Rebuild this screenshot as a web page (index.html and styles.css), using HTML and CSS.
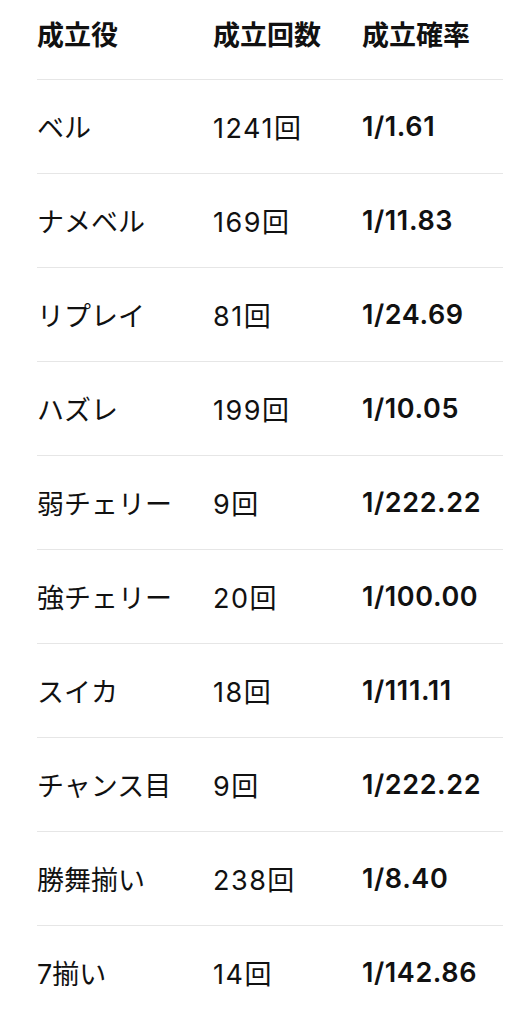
FILE: index.html
```html
<!DOCTYPE html>
<html lang="ja">
<head>
    <meta charset="UTF-8">
    <meta name="viewport" content="width=device-width, initial-scale=1.0">
    <title>成立役</title>
    <link rel="stylesheet" href="styles.css">
</head>
<body>
    <table class="stats">
        <thead>
            <tr>
                <th class="col-name">成立役</th>
                <th class="col-count">成立回数</th>
                <th class="col-rate">成立確率</th>
            </tr>
        </thead>
        <tbody>
            <tr><td>ベル</td><td class="count">1241回</td><td class="rate">1/1.61</td></tr>
            <tr><td>ナメベル</td><td class="count">169回</td><td class="rate">1/11.83</td></tr>
            <tr><td>リプレイ</td><td class="count">81回</td><td class="rate">1/24.69</td></tr>
            <tr><td>ハズレ</td><td class="count">199回</td><td class="rate">1/10.05</td></tr>
            <tr><td>弱チェリー</td><td class="count">9回</td><td class="rate">1/222.22</td></tr>
            <tr><td>強チェリー</td><td class="count">20回</td><td class="rate">1/100.00</td></tr>
            <tr><td>スイカ</td><td class="count">18回</td><td class="rate">1/111.11</td></tr>
            <tr><td>チャンス目</td><td class="count">9回</td><td class="rate">1/222.22</td></tr>
            <tr><td>勝舞揃い</td><td class="count">238回</td><td class="rate">1/8.40</td></tr>
            <tr><td>7揃い</td><td class="count">14回</td><td class="rate">1/142.86</td></tr>
        </tbody>
    </table>
</body>
</html>
```

FILE: styles.css
```css
body {
    margin: 0;
    padding: 0;
    background: #ffffff;
    color: #111111;
    font-family: Inter, "Noto Sans CJK JP", sans-serif;
}

.stats {
    width: 466px;
    margin-left: 37px;
    border-collapse: collapse;
    font-size: 27px;
}

.stats th,
.stats td {
    padding: 0;
    text-align: left;
    white-space: nowrap;
}

.stats th {
    font-weight: 700;
    height: 79px;
    padding-bottom: 11px;
    box-sizing: border-box;
    vertical-align: middle;
    border-bottom: 1px solid #e6e6e6;
}

.col-name {
    width: 176px;
}

.col-count {
    width: 149px;
}

.stats td {
    height: 93px;
    vertical-align: middle;
    border-bottom: 1px solid #e6e6e6;
}

.stats tbody tr:last-child td {
    border-bottom: none;
}

.stats .count {
    letter-spacing: 1.5px;
}

.stats .rate {
    font-weight: 600;
    letter-spacing: 0.6px;
}
```
